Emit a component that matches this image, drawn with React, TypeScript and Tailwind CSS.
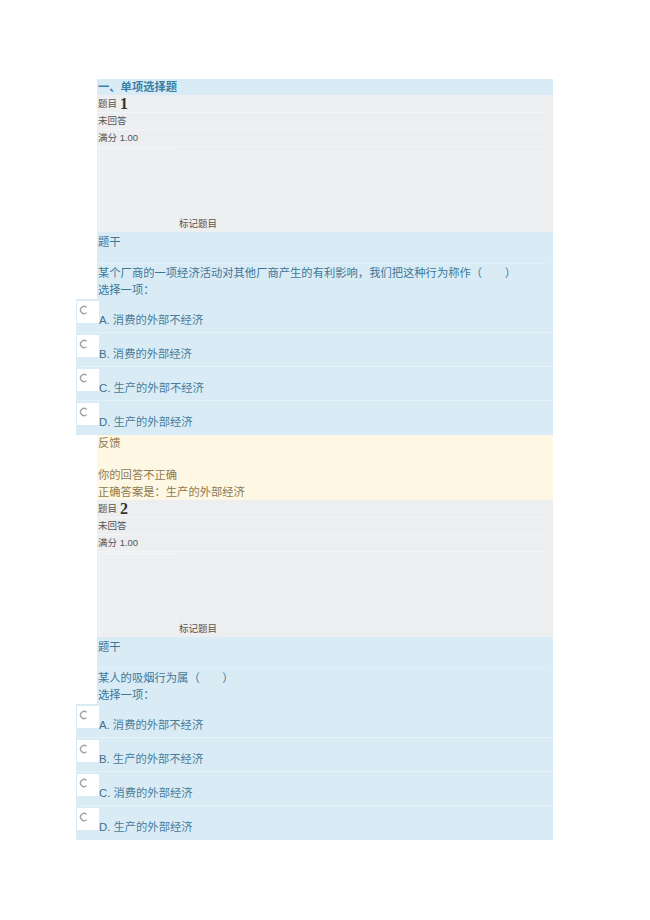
import React from "react";

type Question = {
  no: number;
  stem: string;
  options: string[];
  feedback?: { result: string; answer: string };
};

const questions: Question[] = [
  {
    no: 1,
    stem: "某个厂商的一项经济活动对其他厂商产生的有利影响，我们把这种行为称作（\u3000\u3000）",
    options: ["消费的外部不经济", "消费的外部经济", "生产的外部不经济", "生产的外部经济"],
    feedback: { result: "你的回答不正确", answer: "正确答案是：生产的外部经济" },
  },
  {
    no: 2,
    stem: "某人的吸烟行为属（\u3000\u3000）",
    options: ["消费的外部不经济", "生产的外部不经济", "消费的外部经济", "生产的外部经济"],
  },
];

const font = { fontFamily: '"Liberation Sans", "Noto Sans CJK SC", sans-serif' };

// old style radio: grey ring drawn open on the right
const Radio = () => (
  <svg width="10" height="10" viewBox="0 0 10 10" className="ml-[2px] mt-[4px]">
    <path d="M7.6 2.4 A3.6 3.6 0 1 0 7.6 7.6" fill="none" stroke="#9aa0a5" strokeWidth="1.3" />
  </svg>
);

const InfoBlock = ({ no }: { no: number }) => (
  <div className="ml-[21px] bg-[#eceef0] text-[#555] text-[9.5px] pl-[1px] pt-[2px]">
    <div className="h-[16px] flex items-end mr-[6px] border-b border-[#f3f4f5]">
      <span className="leading-[14px] pb-[1px]">题目</span>
      <span
        className="ml-[3px] text-[16px] font-bold text-[#333] leading-[16px]"
        style={{ fontFamily: '"Liberation Serif", serif' }}
      >
        {no}
      </span>
    </div>
    <div className="h-[17px] flex items-end pb-[1px] leading-[14px] mr-[6px] border-b border-[#f3f4f5]">未回答</div>
    <div className="h-[17px] flex items-end pb-[1px] leading-[14px] mr-[6px] border-b border-[#f3f4f5]">满分 1.00</div>
    <div className="h-[85px] flex -ml-[1px]">
      <div className="ml-[2px] mt-[1px] w-[78px] h-[84px] bg-[#eeeff1] border-l border-t border-[#f4f5f6]" />
      <div className="self-end mb-[1px] leading-[14px] border-l border-[#f2f3f4] pl-[1px]">标记题目</div>
    </div>
  </div>
);

const QuestionBlock = ({ q }: { q: Question }) => (
  <div>
    <InfoBlock no={q.no} />
    <div className="ml-[21px] bg-[#d9ecf6] text-[11.3px] text-[#3f7696] pt-[1px] pl-[1px]">
      <div className="leading-[18px]">题干</div>
      <div className="h-[13px] border-b border-[#e2f1f9] mr-[6px]" />
      <div className="leading-[18px]">{q.stem}</div>
      <div className="leading-[17px]">选择一项：</div>
    </div>
    {q.options.map((opt, i) => (
      <div
        key={i}
        className={`h-[34px] bg-[#d9ecf6] flex ${i < q.options.length - 1 ? "border-b border-[#e3f1f8]" : ""}`}
      >
        <div className="mt-[2px] ml-[1px] w-[22px] h-[22px] bg-white">
          <Radio />
        </div>
        <div className="pt-[13px] leading-[16px] text-[11.3px] text-[#4a7c99]">
          <span className="text-[#3d6f8c]">{String.fromCharCode(65 + i)}.</span> {opt}
        </div>
      </div>
    ))}
    {q.feedback && (
      <div className="ml-[21px] bg-[#fdf7e4] text-[11.3px] text-[#8f7a52] h-[65px] pl-[1px]">
        <div className="leading-[16px]">反馈</div>
        <div className="h-[16px]" />
        <div className="leading-[17px]">{q.feedback.result}</div>
        <div className="leading-[17px]">{q.feedback.answer}</div>
      </div>
    )}
  </div>
);

export default function App() {
  return (
    <div className="min-h-[920px] bg-white pt-[79px]" style={font}>
      <div className="ml-[76px] w-[477px]">
        <div className="ml-[21px] h-[16px] pl-[1px] bg-[#d9ecf6] text-[11.3px] font-bold text-[#3a7ea6] leading-[17px]">
          一、单项选择题
        </div>
        {questions.map((q) => (
          <QuestionBlock key={q.no} q={q} />
        ))}
      </div>
    </div>
  );
}
